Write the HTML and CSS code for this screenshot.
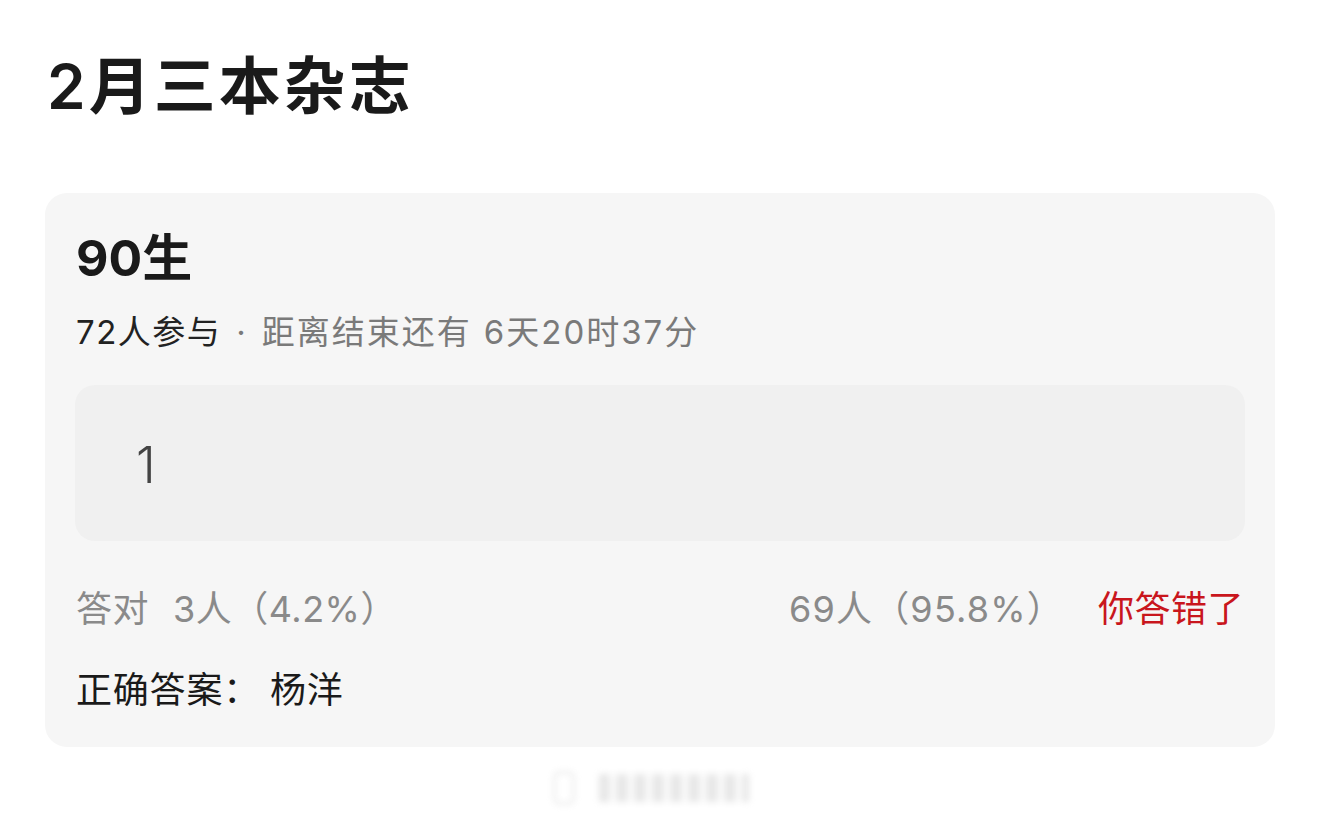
FILE: index.html
```html
<!DOCTYPE html>
<html lang="zh-CN">
<head>
<meta charset="utf-8">
<link rel="stylesheet" href="styles.css">
</head>
<body>
<div class="page">
  <h1 class="title">2月三本杂志</h1>
  <div class="card">
    <div class="card-title">90生</div>
    <div class="meta"><span class="meta-count">72人参与</span><span class="meta-rest"><span class="dot">·</span>距离结束还有<span class="sp"></span>6天20时37分</span></div>
    <div class="answer-box"><span class="answer">1</span></div>
    <div class="stats">
      <div class="stats-left"><span class="label">答对</span>3人（4.2%）</div>
      <div class="stats-right"><span class="wrong-count">69人（95.8%）</span><span class="wrong">你答错了</span></div>
    </div>
    <div class="correct"><span class="label">正确答案：</span>杨洋</div>
  </div>
  <div class="footer-mark"><span class="mark-a"></span><span class="mark-b"></span></div>
</div>
</body>
</html>
```
FILE: styles.css
```css
* { box-sizing: border-box; }
html, body { margin: 0; padding: 0; background: #ffffff; }
body {
  width: 1320px;
  height: 820px;
  overflow: hidden;
  font-family: Inter, "Noto Sans CJK SC", sans-serif;
}
.page {
  padding: 42px 45px 0 45px;
}
.title {
  margin: 0 0 0 2px;
  font-size: 62px;
  line-height: 90px;
  font-weight: 600;
  color: #1a1a1a;
  letter-spacing: 3px;
}
.card {
  margin-top: 61px;
  width: 1230px;
  height: 554px;
  background: #f6f6f6;
  border-radius: 22px;
  padding: 35px 30px 0 31px;
}
.card-title {
  font-size: 50px;
  line-height: 60px;
  font-weight: 700;
  color: #1a1a1a;
}
.meta {
  margin-top: 24px;
  font-size: 33px;
  line-height: 40px;
  letter-spacing: 1.5px;
  display: flex;
  align-items: baseline;
}
.meta-count { color: #222; }
.meta-rest { color: #7a7a7a; display: flex; align-items: baseline; letter-spacing: 2px; }
.dot { margin: 0 14px 0 15px; }
.sp { display: inline-block; width: 12px; }
.answer-box {
  margin-top: 33px;
  height: 156px;
  width: 1170px;
  margin-left: -1px;
  background: #f0f0f0;
  border-radius: 20px;
  display: flex;
  align-items: center;
  padding-left: 61px;
}
.answer {
  font-size: 50px;
  font-weight: 300;
  color: #444;
  margin-top: 4px;
}
.stats {
  margin-top: 45px;
  display: flex;
  justify-content: space-between;
  font-size: 36px;
  line-height: 46px;
  width: 1168px;
  letter-spacing: 0.5px;
}
.label { margin-right: 24px; }
.correct .label { margin-right: 10px; }
.stats-left { color: #8a8a8a; }
.stats-right { color: #8a8a8a; display: flex; gap: 34px; }
.wrong-count { letter-spacing: 1.2px; }
.wrong { color: #c9161d; }
.correct {
  margin-top: 35px;
  font-size: 36px;
  line-height: 46px;
  letter-spacing: 0.8px;
  color: #1a1a1a;
}
.footer-mark {
  margin-top: 24px;
  margin-left: 508px;
  display: flex;
  gap: 24px;
  align-items: center;
  opacity: 0.35;
  filter: blur(3px);
}
.mark-a { width: 22px; height: 34px; border: 3px solid #ccc; border-radius: 6px; }
.mark-b { width: 150px; height: 28px; background: repeating-linear-gradient(90deg, #bbb 0 10px, #eee 10px 18px); }
```
